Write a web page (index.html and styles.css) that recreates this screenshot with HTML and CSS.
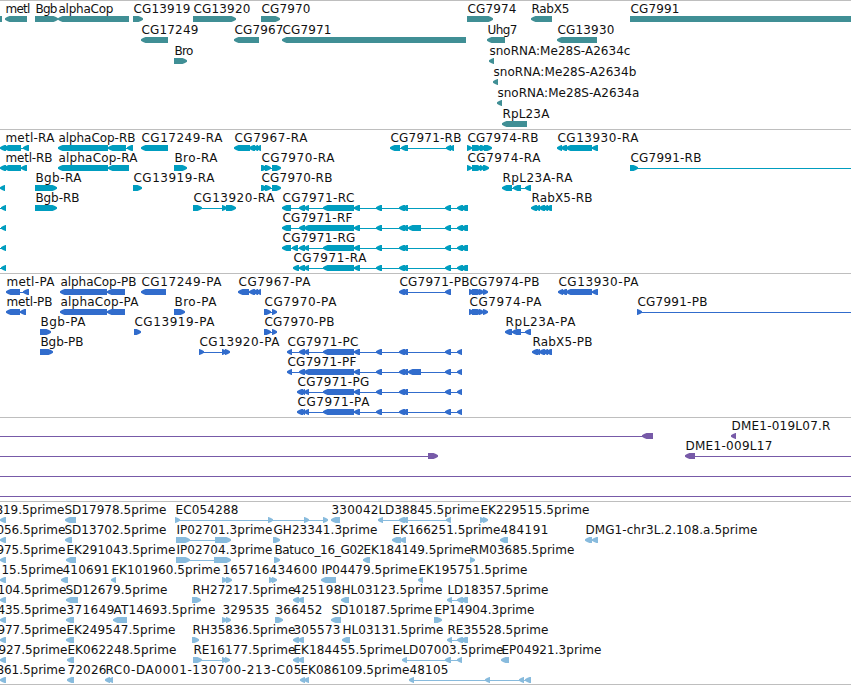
FILE: index.html
```
<!DOCTYPE html>
<html lang="en">
<head>
    <meta charset="UTF-8">
    <meta name="viewport" content="width=device-width, initial-scale=1.0">
    <title>Genome tracks</title>
    <link rel="stylesheet" href="styles.css">
</head>
<body>
    <div class="browser">
        <div class="track genes" id="genes"></div>
        <div class="track mrna" id="mrna"></div>
        <div class="track cds" id="cds"></div>
        <div class="track bac" id="bac"></div>
        <div class="track est" id="est"></div>
    </div>
    <script src="tracks.js"></script>
</body>
</html>
```

FILE: styles.css
```
body{
    margin: 0;
    background: #fff;
    overflow: hidden;
}
.browser{
    display: flex;
    flex-direction: column;
    border-bottom: 1px solid #bebebe;
}
.track{
    border-top: 1px solid #bebebe;
    padding-bottom: 3px;
}
.genes, .est{
    padding-bottom: 2px;
}
.row{
    display: block;
    width: 100%;
    height: 20px;
    overflow: visible;
}
.genes .row{
    height: 21px;
}
.row text{
    font-family: "DejaVu Sans", Verdana, sans-serif;
    font-size: 12px;
    fill: #111;
}
.genes{
    color: #408f95;
}
.mrna{
    color: #009dbf;
}
.cds{
    color: #316ccc;
}
.bac{
    color: #775aa8;
}
.est{
    color: #88bbdd;
}
.block{
    fill: currentColor;
}
.line{
    fill: currentColor;
    shape-rendering: crispEdges;
}
```

FILE: tracks.js
```
// feature: [label, label start, label end, direction, "start-end start-end ..."]
// ends outside 0..851 run off the view, ~ is a minus sign

var tail = ' 354-360 376-382 399-405 402-408 445-451 457-463 461-468';
var tailP = ' 354-360 376-382 399-405 402-408 445-451 457-462';

var tracks = {
    genes: [
        [
            ['', 0, 0, '<', '~20-2'],
            ['metl', 5, 30, '<', '5-27'],
            ['Bgb', 35, 57, '>', '35-58'],
            ['alphaCop', 58, 113, '<', '58-129'],
            ['CG13919', 133, 190, '>', '133-143'],
            ['CG13920', 193, 250, '>', '193-236'],
            ['CG7970', 261, 310, '>', '261-280'],
            ['CG7974', 467, 516, '>', '467-493'],
            ['RabX5', 531, 569, '<', '531-552'],
            ['CG7991', 630, 679, '>', '630-900']
        ],
        [
            ['CG17249', 141, 198, '<', '141-168'],
            ['CG7967', 234, 283, '<', '234-259'],
            ['CG7971', 282, 331, '<', '282-466'],
            ['Uhg7', 487, 517, '<', '487-505'],
            ['CG13930', 557, 614, '<', '557-597']
        ],
        [
            ['Bro', 174, 193, '>', '174-187'],
            ['snoRNA:Me28S-A2634c', 489, 630, '<', '489-494']
        ],
        [['snoRNA:Me28S-A2634b', 493, 636, '<', '493-498']],
        [['snoRNA:Me28S-A2634a', 497, 639, '<', '497-502']],
        [['RpL23A', 502, 549, '<', '502-527']]
    ],
    mrna: [
        [
            ['metl-RA', 5, 54, '<', '0-6 4-21 23-29'],
            ['alphaCop-RB', 58, 135, '<', '58-108 108-126 127-133'],
            ['CG17249-RA', 141, 222, '<', '141-168'],
            ['CG7967-RA', 234, 307, '<', '234-250 249-255 253-258 256-261'],
            ['CG7971-RB', 390, 461, '<', '390-400 401-408 446-451 449-454'],
            ['CG7974-RB', 467, 538, '>', '467-472 472-482 480-486 484-492'],
            ['CG13930-RA', 557, 638, '<', '557-562 561-567 566-592 592-598']
        ],
        [
            ['metl-RB', 5, 52, '<', '0-6 4-21 21-27'],
            ['alphaCop-RA', 58, 137, '<', '58-108 108-129'],
            ['Bro-RA', 174, 217, '>', '174-187'],
            ['CG7970-RA', 261, 334, '>', '261-267 265-271 272-281'],
            ['CG7974-RA', 467, 540, '>', '467-472 472-482 480-484 483-489'],
            ['CG7991-RB', 630, 701, '>', '630-638 900-905']
        ],
        [
            ['', 0, 0, '<', '0-5'],
            ['Bgb-RA', 35, 81, '>', '35-57'],
            ['CG13919-RA', 133, 214, '>', '133-142'],
            ['CG7970-RB', 261, 332, '>', '261-267 265-271 272-281'],
            ['RpL23A-RA', 502, 572, '<', '502-512 513-521 525-531']
        ],
        [
            ['', 0, 0, '<', '~9-~4 1-6'],
            ['Bgb-RB', 35, 79, '>', '35-57'],
            ['CG13920-RA', 193, 274, '>', '193-202 222-227 226-236'],
            ['CG7971-RC', 282, 354, '<', '282-291 299-305 304-309 323-354' + tail],
            ['RabX5-RB', 531, 592, '<', '531-537 535-540 539-545 543-548 546-552']
        ],
        [
            ['', 0, 0, '<', '~9-~4 1-6'],
            ['CG7971-RF', 282, 352, '<', '282-291 299-305 304-354' + tail + ' 408-421']
        ],
        [
            ['', 0, 0, '<', '~9-~4 1-6'],
            ['CG7971-RG', 282, 355, '<', '282-291 292-298 299-305 304-309 323-354' + tail]
        ],
        [
            ['', 0, 0, '<', '~9-~4 1-6'],
            ['CG7971-RA', 293, 366, '<', '293-299 299-305 304-309 323-354' + tail]
        ]
    ],
    cds: [
        [
            ['metl-PA', 6, 54, '<', '6-20 23-29'],
            ['alphaCop-PB', 60, 136, '<', '60-107 107-125'],
            ['CG17249-PA', 141, 221, '<', '141-166'],
            ['CG7967-PA', 238, 310, '<', '238-249 249-255 253-258 256-261'],
            ['CG7971-PB', 399, 469, '<', '399-405 402-408 445-451'],
            ['CG7974-PB', 469, 539, '>', '469-474 472-482 479-484 483-488'],
            ['CG13930-PA', 558, 638, '<', '558-563 561-567 566-592 592-598']
        ],
        [
            ['metl-PB', 6, 52, '<', '6-20 20-26'],
            ['alphaCop-PA', 60, 138, '<', '60-107 107-125'],
            ['Bro-PA', 174, 216, '>', '174-185'],
            ['CG7970-PA', 264, 336, '>', '264-271 272-277'],
            ['CG7974-PA', 469, 541, '>', '469-474 472-482 479-484 483-488'],
            ['CG7991-PB', 637, 707, '>', '637-642 900-905']
        ],
        [
            ['Bgb-PA', 40, 85, '>', '40-51'],
            ['CG13919-PA', 134, 214, '>', '134-141'],
            ['CG7970-PB', 264, 334, '>', '264-271 272-277'],
            ['RpL23A-PA', 505, 575, '<', '505-512 512-521 525-531']
        ],
        [
            ['Bgb-PB', 40, 83, '>', '40-53'],
            ['CG13920-PA', 199, 279, '>', '199-204 222-227 225-230'],
            ['CG7971-PC', 287, 358, '<', '287-292 299-305 304-309 323-354' + tailP],
            ['RabX5-PB', 532, 592, '<', '532-538 535-540 539-545 543-548 546-552']
        ],
        [['CG7971-PF', 287, 356, '<', '287-292 299-305 304-354' + tailP + ' 408-421']],
        [['CG7971-PG', 297, 369, '<', '297-303 301-305 304-309 323-354' + tailP]],
        [['CG7971-PA', 297, 369, '<', '297-303 301-305 304-309 323-354' + tailP]]
    ],
    bac: [
        [
            ['', 0, 0, '<', '~20-~10 642-653'],
            ['DME1-019L07.R', 731, 830, '<', '731-736']
        ],
        [
            ['', 0, 0, '>', '~20-~10 428-438'],
            ['DME1-009L17', 685, 772, '<', '685-695 900-910']
        ],
        [['', 0, 0, '>', '~20-~10 900-910']],
        [['', 0, 0, '>', '~20-~10 900-910']]
    ],
    est: [
        [
            ['819.5prime', -5, 64, '<', '0-6'],
            ['SD17978.5prime', 64, 166, '<', '65-76'],
            ['EC054288', 175, 238, '>', '175-180 268-273 304-309 323-328'],
            ['330042', 331, 378, '<', '331-340'],
            ['LD38845.5prime', 378, 479, '<', '378-383 399-405 402-408 446-451'],
            ['EK229515.5prime', 480, 589, '>', '480-485 483-488']
        ],
        [
            ['056.5prime', -4, 65, '<', '0-6'],
            ['SD13702.5prime', 64, 166, '<', '65-72'],
            ['IP02701.3prime', 176, 272, '>', '176-190 215-231'],
            ['GH23341.3prime', 273, 377, '>', '273-280'],
            ['EK166251.5prime', 392, 500, '<', '392-401 400-406'],
            ['484191', 500, 548, '<', '500-508'],
            ['DMG1-chr3L.2.108.a.5prime', 585, 757, '<', '585-592 592-598']
        ],
        [
            ['975.5prime', -4, 65, '<', '0-6'],
            ['EK291043.5prime', 66, 175, '<', '66-76'],
            ['IP02704.3prime', 176, 272, '>', '176-190 214-231'],
            ['Batuco_16_G02', 274, 364, '>', '274-280'],
            ['EK184149.5prime', 363, 471, '<', '363-370'],
            ['RM03685.5prime', 470, 574, '>', '470-475']
        ],
        [
            ['15.5prime', 1, 63, '<', '0-6'],
            ['410691', 62, 109, '<', '61-68'],
            ['EK101960.5prime', 111, 220, '<', '111-116'],
            ['165716', 222, 269, '>', '222-227 226-232'],
            ['434600', 269, 317, '>', '269-274 272-277'],
            ['IP04479.5prime', 321, 417, '<', '321-336'],
            ['EK195751.5prime', 418, 527, '<', '418-423']
        ],
        [
            ['104.5prime', -3, 66, '<', '0-6'],
            ['SD12679.5prime', 65, 167, '<', '66-78'],
            ['RH27217.5prime', 192, 295, '>', '192-201'],
            ['425198', 293, 341, '<', '293-299 298-304'],
            ['HL03123.5prime', 341, 442, '<', '341-349'],
            ['LD18357.5prime', 447, 548, '<', '447-452 457-463 461-468']
        ],
        [
            ['435.5prime', -3, 66, '<', '0-6'],
            ['371649', 66, 114, '<', '66-74'],
            ['AT14693.5prime', 113, 215, '<', '113-127'],
            ['329535', 222, 269, '>', '222-227 226-231'],
            ['366452', 275, 322, '>', '275-283'],
            ['SD10187.5prime', 331, 432, '<', '331-341'],
            ['EP14904.3prime', 434, 534, '>', '434-442']
        ],
        [
            ['977.5prime', -3, 66, '<', '0-6'],
            ['EK249547.5prime', 66, 175, '<', '66-74'],
            ['RH35836.5prime', 192, 295, '>', '192-199'],
            ['305573', 293, 340, '<', '293-299 298-304'],
            ['HL03131.5prime', 342, 443, '<', '342-350'],
            ['RE35528.5prime', 447, 548, '<', '447-452 457-463 461-468']
        ],
        [
            ['927.5prime', -2, 67, '<', '0-6'],
            ['EK062248.5prime', 67, 176, '<', '67-74'],
            ['RE16177.5prime', 193, 295, '>', '193-202 222-227 225-230'],
            ['EK184455.5prime', 293, 402, '<', '293-299 298-304'],
            ['LD07003.5prime', 402, 503, '<', '402-407 445-451 457-462'],
            ['EP04921.3prime', 501, 601, '<', '501-509']
        ],
        [
            ['861.5prime', -4, 65, '<', '0-6'],
            ['72026', 67, 106, '<', '67-74'],
            ['RC0-DA0001-130700-213-C05', 105, 301, '<', '105-110 108-113'],
            ['EK086109.5prime', 300, 409, '<', '300-305 304-309'],
            ['48105', 409, 448, '<', '409-414 485-490 519-524 525-531']
        ]
    ]
};

function block(a, b, dir) {
    var h = Math.min(5, b - a);
    var d = dir == '<' ? 1 : -1;
    // tip, middle of the head, neck and back of the arrow
    var tip = dir == '<' ? a : b;
    var back = dir == '<' ? b : a;
    var mid = tip + d * h * 0.4;
    var neck = tip + d * h * 0.9;
    return `<polygon class="block" points="${tip},17.2 ${mid},16 ${neck},15 ${back},15 ${back},21 ${neck},21 ${mid},20 ${tip},18.8"/>`;
}

function feature(f) {
    var spans = f[4].split(' ').map(s => s.split('-').map(n => Number(n.replace('~', '-'))));
    var from = Math.min(...spans.map(s => s[0]));
    var to = Math.max(...spans.map(s => s[1]));
    var out = '';
    if (spans.length > 1) {
        out += `<rect class="line" x="${from + 1}" y="18" width="${to - from - 2}" height="1"/>`;
    }
    spans.forEach(s => out += block(s[0], s[1], f[3]));
    if (f[0]) {
        out += `<text x="${f[1] + 0.4}" y="12" textLength="${f[2] - f[1]}">${f[0]}</text>`;
    }
    return out;
}

for (var id in tracks) {
    document.getElementById(id).innerHTML = tracks[id]
        .map(row => `<svg class="row">${row.map(feature).join('')}</svg>`)
        .join('');
}
```
